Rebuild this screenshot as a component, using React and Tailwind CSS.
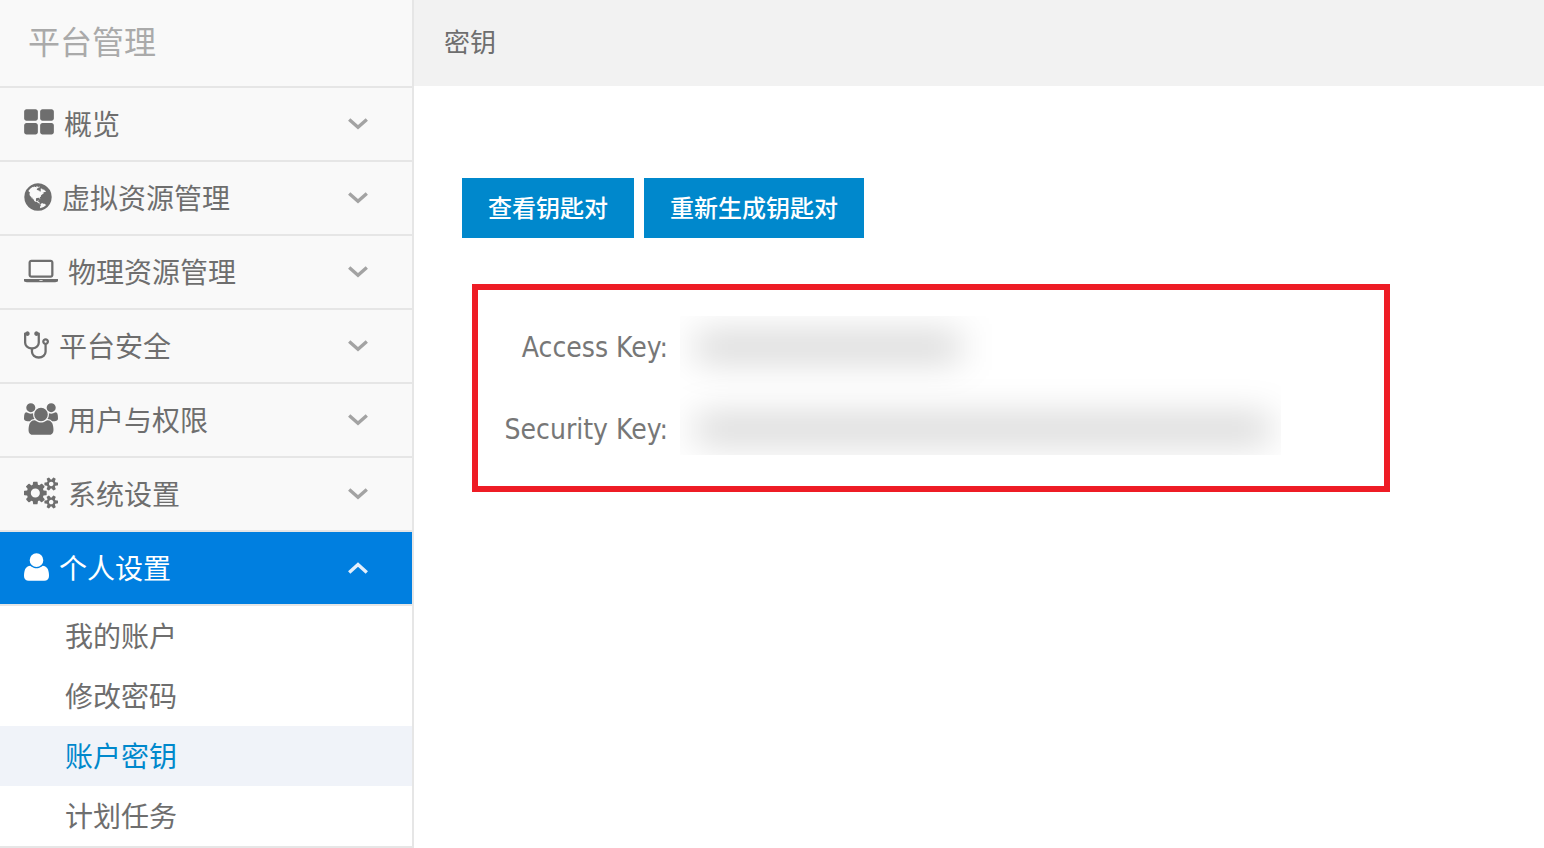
import React from "react";

const SMALL_COG =
  "q-12 -27 -30 -52q51 -113 51 -138q0 -4 -4 -7q-122 -71 -124 -71q-8 0 -46 47t-52 68q-20 -2 -30 -2t-30 2q-14 -21 -52 -68t-46 -47q-2 0 -124 71q-4 3 -4 7q0 25 51 138q-18 25 -30 52q-149 15 -149 31v140q0 16 149 31q13 29 30 52q-51 113 -51 138q0 4 4 7q4 2 35 20t59 34t30 16q8 0 46 -46.5t52 -67.5q20 2 30 2t30 -2q51 71 92 112l6 2q4 0 124 -70q4 -3 4 -7q0 -25 -51 -138q17 -23 30 -52q149 -15 149 -31z";

const icons = {
  grid: {
    advance: 1664,
    size: "w-[30px]",
    d: "M768 512v-384q0 -52 -38 -90t-90 -38h-512q-52 0 -90 38t-38 90v384q0 52 38 90t90 38h512q52 0 90 -38t38 -90zM768 1280v-384q0 -52 -38 -90t-90 -38h-512q-52 0 -90 38t-38 90v384q0 52 38 90t90 38h512q52 0 90 -38t38 -90zM1664 512v-384q0 -52 -38 -90t-90 -38h-512q-52 0 -90 38t-38 90v384q0 52 38 90t90 38h512q52 0 90 -38t38 -90zM1664 1280v-384q0 -52 -38 -90t-90 -38h-512q-52 0 -90 38t-38 90v384q0 52 38 90t90 38h512q52 0 90 -38t38 -90z",
  },
  globe: {
    advance: 1536,
    size: "w-[28px]",
    d: "M768 1408q209 0 385.5 -103t279.5 -279.5t103 -385.5t-103 -385.5t-279.5 -279.5t-385.5 -103t-385.5 103t-279.5 279.5t-103 385.5t103 385.5t279.5 279.5t385.5 103zM1042 887q-2 -1 -9.5 -9.5t-13.5 -9.5q2 0 4.5 5t5 11t3.5 7q6 7 22 15q14 6 52 12q34 8 51 -11q-2 2 9.5 13t14.5 12q3 2 15 4.5t15 7.5l2 22q-12 -1 -17.5 7t-6.5 21q0 -2 -6 -8q0 7 -4.5 8t-11.5 -1t-9 -1q-10 3 -15 7.5t-8 16.5t-4 15q-2 5 -9.5 11t-9.5 10q-1 2 -2.5 5.5t-3 6.5t-4 5.5t-5.5 2.5t-7 -5t-7.5 -10t-4.5 -5q-3 2 -6 1.5t-4.5 -1t-4.5 -3t-5 -3.5q-3 -2 -8.5 -3t-8.5 -2q15 5 -1 11q-10 4 -16 3q9 4 7.5 12t-8.5 14h5q-1 4 -8.5 8.5t-17.5 8.5t-13 6q-8 5 -34 9.5t-33 0.5q-5 -6 -4.5 -10.5t4 -14t3.5 -12.5q1 -6 -5.5 -13t-6.5 -12q0 -7 14 -15.5t10 -21.5q-3 -8 -16 -16t-16 -12q-5 -8 -1.5 -18.5t10.5 -16.5q2 -2 1.5 -4t-3.5 -4.5t-5.5 -4t-6.5 -3.5l-3 -2q-11 -5 -20.5 6t-13.5 26q-7 25 -16 30q-23 8 -29 -1q-5 13 -41 26q-25 9 -58 4q6 1 0 15q-7 15 -19 12q3 6 4 17.5t1 13.5q3 13 12 23q1 1 7 8.5t9.5 13.5t0.5 6q35 -4 50 11q5 5 11.5 17t10.5 17q9 6 14 5.5t14.5 -5.5t14.5 -5q14 -1 15.5 11t-7.5 20q12 -1 3 17q-4 7 -8 9q-12 4 -27 -5q-8 -4 2 -8q-1 1 -9.5 -10.5t-16.5 -17.5t-16 5q-1 1 -5.5 13.5t-9.5 13.5q-8 0 -16 -15q3 8 -11 15t-24 8q19 12 -8 27q-7 4 -20.5 5t-19.5 -4q-5 -7 -5.5 -11.5t5 -8t10.5 -5.5t11.5 -4t8.5 -3q14 -10 8 -14q-2 -1 -8.5 -3.5t-11.5 -4.5t-6 -4q-3 -4 0 -14t-2 -14q-5 5 -9 17.5t-7 16.5q7 -9 -25 -6l-10 1q-4 0 -16 -2t-20.5 -1t-13.5 8q-4 8 0 20q1 4 4 2q-4 3 -11 9.5t-10 8.5q-46 -15 -94 -41q6 -1 12 1q5 2 13 6.5t10 5.5q34 14 42 7l5 5q14 -16 20 -25q-7 4 -30 1q-20 -6 -22 -12q7 -12 5 -18q-4 3 -11.5 10t-14.5 11t-15 5q-16 0 -22 -1q-146 -80 -235 -222q7 -7 12 -8q4 -1 5 -9t2.5 -11t11.5 3q9 -8 3 -19q1 1 44 -27q19 -17 21 -21q3 -11 -10 -18q-1 2 -9 9t-9 4q-3 -5 0.5 -18.5t10.5 -12.5q-7 0 -9.5 -16t-2.5 -35.5t-1 -23.5l2 -1q-3 -12 5.5 -34.5t21.5 -19.5q-13 -3 20 -43q6 -8 8 -9q3 -2 12 -7.5t15 -10t10 -10.5q4 -5 10 -22.5t14 -23.5q-2 -6 9.5 -20t10.5 -23q-1 0 -2.5 -1t-2.5 -1q3 -7 15.5 -14t15.5 -13q1 -3 2 -10t3 -11t8 -2q2 20 -24 62q-15 25 -17 29q-3 5 -5.5 15.5t-4.5 14.5q2 0 6 -1.5t8.5 -3.5t7.5 -4t2 -3q-3 -7 2 -17.5t12 -18.5t17 -19t12 -13q6 -6 14 -19.5t0 -13.5q9 0 20 -10t17 -20q5 -8 8 -26t5 -24q2 -7 8.5 -13.5t12.5 -9.5l16 -8t13 -7q5 -2 18.5 -10.5t21.5 -11.5q10 -4 16 -4t14.5 2.5t13.5 3.5q15 2 29 -15t21 -21q36 -19 55 -11q-2 -1 0.5 -7.5t8 -15.5t9 -14.5t5.5 -8.5q5 -6 18 -15t18 -15q6 4 7 9q-3 -8 7 -20t18 -10q14 3 14 32q-31 -15 -49 18q0 1 -2.5 5.5t-4 8.5t-2.5 8.5t0 7.5t5 3q9 0 10 3.5t-2 12.5t-4 13q-1 8 -11 20t-12 15q-5 -9 -16 -8t-16 9q0 -1 -1.5 -5.5t-1.5 -6.5q-13 0 -15 1q1 3 2.5 17.5t3.5 22.5q1 4 5.5 12t7.5 14.5t4 12.5t-4.5 9.5t-17.5 2.5q-19 -1 -26 -20q-1 -3 -3 -10.5t-5 -11.5t-9 -7q-7 -3 -24 -2t-24 5q-13 8 -22.5 29t-9.5 37q0 10 2.5 26.5t3 25t-5.5 24.5q3 2 9 9.5t10 10.5q2 1 4.5 1.5t4.5 0t4 1.5t3 6q-1 1 -4 3q-3 3 -4 3q7 -3 28.5 1.5t27.5 -1.5q15 -11 22 2q0 1 -2.5 9.5t-0.5 13.5q5 -27 29 -9q3 -3 15.5 -5t17.5 -5q3 -2 7 -5.5t5.5 -4.5t5 0.5t8.5 6.5q10 -14 12 -24q11 -40 19 -44q7 -3 11 -2t4.5 9.5t0 14t-1.5 12.5l-1 8v18l-1 8q-15 3 -18.5 12t1.5 18.5t15 18.5q1 1 8 3.5t15.5 6.5t12.5 8q21 19 15 35q7 0 11 9q-1 0 -5 3t-7.5 5t-4.5 2q9 5 2 16q5 3 7.5 11t7.5 10q9 -12 21 -2q8 8 1 16q5 7 20.5 10.5t18.5 9.5q7 -2 8 2t1 12t3 12q4 5 15 9t13 5l17 11q3 4 0 4q18 -2 31 11q10 11 -6 20q3 6 -3 9.5t-15 5.5q3 1 11.5 0.5t10.5 1.5q15 10 -7 16q-17 5 -43 -12zM879 10q206 36 351 189q-3 3 -12.5 4.5t-12.5 3.5q-18 7 -24 8q1 7 -2.5 13t-8 9t-12.5 8t-11 7q-2 2 -7 6t-7 5.5t-7.5 4.5t-8.5 2t-10 -1l-3 -1q-3 -1 -5.5 -2.5t-5.5 -3t-4 -3t0 -2.5q-21 17 -36 22q-5 1 -11 5.5t-10.5 7t-10 1.5t-11.5 -7q-5 -5 -6 -15t-2 -13q-7 5 0 17.5t2 18.5q-3 6 -10.5 4.5t-12 -4.5t-11.5 -8.5t-9 -6.5t-8.5 -5.5t-8.5 -7.5q-3 -4 -6 -12t-5 -11q-2 4 -11.5 6.5t-9.5 5.5q2 -10 4 -35t5 -38q7 -31 -12 -48q-27 -25 -29 -40q-4 -22 12 -26q0 -7 -8 -20.5t-7 -21.5q0 -6 2 -16z",
  },
  laptop: {
    advance: 1920,
    size: "w-[34px]",
    d: "M416 256q-66 0 -113 47t-47 113v704q0 66 47 113t113 47h1088q66 0 113 -47t47 -113v-704q0 -66 -47 -113t-113 -47h-1088zM384 1120v-704q0 -13 9.5 -22.5t22.5 -9.5h1088q13 0 22.5 9.5t9.5 22.5v704q0 13 -9.5 22.5t-22.5 9.5h-1088q-13 0 -22.5 -9.5t-9.5 -22.5zM1760 192h160v-96q0 -40 -47 -68t-113 -28h-1600q-66 0 -113 28t-47 68v96h160h1600zM1040 96q16 0 16 16t-16 16h-160q-16 0 -16 -16t16 -16h160z",
  },
  stethoscope: {
    advance: 1408,
    size: "w-[25px]",
    d: "M1280 832q0 26 -19 45t-45 19t-45 -19t-19 -45t19 -45t45 -19t45 19t19 45zM1408 832q0 -62 -35.5 -111t-92.5 -70v-395q0 -159 -131.5 -271.5t-316.5 -112.5t-316.5 112.5t-131.5 271.5v132q-164 20 -274 128t-110 252v512q0 26 19 45t45 19q6 0 16 -2q17 30 47 48t65 18q53 0 90.5 -37.5t37.5 -90.5t-37.5 -90.5t-90.5 -37.5q-33 0 -64 18v-402q0 -106 94 -181t226 -75t226 75t94 181v402q-31 -18 -64 -18q-53 0 -90.5 37.5t-37.5 90.5t37.5 90.5t90.5 37.5q35 0 65 -18t47 -48q10 2 16 2q26 0 45 -19t19 -45v-512q0 -144 -110 -252t-274 -128v-132q0 -106 94 -181t226 -75t226 75t94 181v395q-57 21 -92.5 70t-35.5 111q0 80 56 136t136 56t136 -56t56 -136z",
  },
  users: {
    advance: 1920,
    size: "w-[34px]",
    d: "M593 640q-162 -5 -265 -128h-134q-82 0 -138 40.5t-56 118.5q0 353 124 353q6 0 43.5 -21t97.5 -42.5t119 -21.5q67 0 133 23q-5 -37 -5 -66q0 -139 81 -256zM1664 3q0 -120 -73 -189.5t-194 -69.5h-874q-121 0 -194 69.5t-73 189.5q0 53 3.5 103.5t14 109t26.5 108.5t43 97.5t62 81t85.5 53.5t111.5 20q10 0 43 -21.5t73 -48t107 -48t135 -21.5t135 21.5t107 48t73 48t43 21.5q61 0 111.5 -20t85.5 -53.5t62 -81t43 -97.5t26.5 -108.5t14 -109t3.5 -103.5zM640 1280q0 -106 -75 -181t-181 -75t-181 75t-75 181t75 181t181 75t181 -75t75 -181zM1344 896q0 -159 -112.5 -271.5t-271.5 -112.5t-271.5 112.5t-112.5 271.5t112.5 271.5t271.5 112.5t271.5 -112.5t112.5 -271.5zM1920 671q0 -78 -56 -118.5t-138 -40.5h-134q-103 123 -265 128q81 117 81 256q0 29 -5 66q66 -23 133 -23q59 0 119 21.5t97.5 42.5t43.5 21q124 0 124 -353zM1792 1280q0 -106 -75 -181t-181 -75t-181 75t-75 181t75 181t181 75t181 -75t75 -181z",
  },
  cogs: {
    advance: 1920,
    size: "w-[34px]",
    d:
      "M896 640q0 106 -75 181t-181 75t-181 -75t-75 -181t75 -181t181 -75t181 75t75 181zM1664 128q0 52 -38 90t-90 38t-90 -38t-38 -90q0 -53 37.5 -90.5t90.5 -37.5t90.5 37.5t37.5 90.5zM1664 1152q0 52 -38 90t-90 38t-90 -38t-38 -90q0 -53 37.5 -90.5t90.5 -37.5t90.5 37.5t37.5 90.5zM1280 731v-185q0 -10 -7 -19.5t-16 -10.5l-155 -24q-11 -35 -32 -76q34 -48 90 -115q7 -11 7 -20q0 -12 -7 -19q-23 -30 -82.5 -89.5t-78.5 -59.5q-11 0 -21 7l-115 90q-37 -19 -77 -31q-11 -108 -23 -155q-7 -24 -30 -24h-186q-11 0 -20 7.5t-10 17.5l-23 153q-34 10 -75 31l-118 -89q-7 -7 -20 -7q-11 0 -21 8q-144 133 -144 160q0 9 7 19q10 14 41 53t47 61q-23 44 -35 82l-152 24q-10 1 -17 9.5t-7 19.5v185q0 10 7 19.5t16 10.5l155 24q11 35 32 76q-34 48 -90 115q-7 11 -7 20q0 12 7 20q22 30 82 89t79 59q11 0 21 -7l115 -90q34 18 77 32q11 108 23 154q7 24 30 24h186q11 0 20 -7.5t10 -17.5l23 -153q34 -10 75 -31l118 89q8 7 20 7q11 0 21 -8q144 -133 144 -160q0 -8 -7 -19q-12 -16 -42 -54t-45 -60q23 -48 34 -82l152 -23q10 -2 17 -10.5t7 -19.5z" +
      "M1920 198v-140q0 -16 -149 -31" +
      SMALL_COG +
      "M1920 1222v-140q0 -16 -149 -31" +
      SMALL_COG,
  },
  user: {
    advance: 1408,
    size: "w-[25px]",
    d: "M1408 131q0 -120 -73 -189.5t-194 -69.5h-874q-121 0 -194 69.5t-73 189.5q0 53 3.5 103.5t14 109t26.5 108.5t43 97.5t62 81t85.5 53.5t111.5 20q9 0 42 -21.5t74.5 -48t108 -48t133.5 -21.5t133.5 21.5t108 48t74.5 48t42 21.5q61 0 111.5 -20t85.5 -53.5t62 -81t43 -97.5t26.5 -108.5t14 -109t3.5 -103.5zM1088 1024q0 -159 -112.5 -271.5t-271.5 -112.5t-271.5 112.5t-112.5 271.5t112.5 271.5t271.5 112.5t271.5 -112.5t112.5 -271.5z",
  },
};

function Glyph({ name }) {
  const { advance, size, d } = icons[name];
  return (
    <svg
      viewBox={`0 0 ${advance} 1792`}
      className={`h-8 shrink-0 overflow-visible ${size}`}
      fill="currentColor"
      aria-hidden="true"
    >
      <path transform="translate(0 1536) scale(1 -1)" d={d} />
    </svg>
  );
}

function Chevron({ open }) {
  return (
    <svg
      viewBox="0 0 20 12"
      className={`mt-[2px] ml-auto h-3 w-5 shrink-0 ${open ? "text-[#e3effb]" : "text-[#a3a3a3]"}`}
      fill="none"
      stroke="currentColor"
      strokeWidth="3.4"
      aria-hidden="true"
    >
      <path d={open ? "M1.2 10.6L10 2.6L18.8 10.6" : "M1.2 1.4L10 9.2L18.8 1.4"} />
    </svg>
  );
}

const sections = [
  { label: "概览", icon: "grid" },
  { label: "虚拟资源管理", icon: "globe" },
  { label: "物理资源管理", icon: "laptop" },
  { label: "平台安全", icon: "stethoscope" },
  { label: "用户与权限", icon: "users" },
  { label: "系统设置", icon: "cogs" },
  {
    label: "个人设置",
    icon: "user",
    children: ["我的账户", "修改密码", "账户密钥", "计划任务"],
  },
];

function Section({ label, icon, children }) {
  const open = Boolean(children);
  return (
    <li>
      <button
        type="button"
        aria-expanded={open}
        className={`flex w-full items-center gap-[10px] border-b-2 border-[#e6e6e6] pt-[15px] pr-11 pb-[17px] pl-6 text-left text-[28px] leading-10 ${
          open ? "bg-[#007fe0] text-white" : "bg-[#f9f9f9] text-[#6e6e6e]"
        }`}
      >
        <Glyph name={icon} />
        <span>{label}</span>
        <Chevron open={open} />
      </button>
      {open && (
        <ul className="border-b-2 border-[#e6e6e6] bg-white">
          {children.map((item) => (
            <li key={item}>
              <a
                href="#"
                aria-current={item === "账户密钥" ? "page" : undefined}
                className={`block pt-[9px] pb-[11px] pl-[65px] text-[28px] leading-10 ${
                  item === "账户密钥" ? "bg-[#f0f3f9] text-[#0088cc]" : "text-[#6e6e6e]"
                }`}
              >
                {item}
              </a>
            </li>
          ))}
        </ul>
      )}
    </li>
  );
}

function ActionButton({ children }) {
  return (
    <button
      type="button"
      className="bg-[#0088cc] px-[26px] pt-[11px] pb-[13px] text-2xl leading-9 font-medium text-white"
    >
      {children}
    </button>
  );
}

export default function App() {
  return (
    <div className="flex min-h-screen items-start bg-white font-['Noto_Sans_CJK_SC',sans-serif]">
      <aside className="w-[414px] shrink-0 border-r-2 border-[#e6e6e6]">
        <h1 className="border-b-2 border-[#e6e6e6] bg-[#f9f9f9] pt-4 pb-[22px] pl-7 text-[32px] leading-[48px] text-[#aaaaaa]">
          平台管理
        </h1>
        <nav>
          <ul>
            {sections.map((s) => (
              <Section key={s.label} {...s} />
            ))}
          </ul>
        </nav>
      </aside>

      <div className="min-w-0 flex-1">
        <header className="bg-[#f2f2f2] pt-[21px] pb-[25px] pl-[30px] text-[26px] leading-10 text-[#6e6e6e]">
          <h2>密钥</h2>
        </header>
        <main className="pt-[92px] pr-[154px] pl-12">
          <div className="flex gap-[10px]">
            <ActionButton>查看钥匙对</ActionButton>
            <ActionButton>重新生成钥匙对</ActionButton>
          </div>

          <dl className="mt-[46px] ml-[10px] grid auto-rows-[82px] grid-cols-[190px_minmax(0,601px)] items-center gap-x-3 border-[6px] border-[#ee1c25] py-4 font-['DejaVu_Sans_Condensed','Noto_Sans',sans-serif] text-[28px] leading-9 text-[#777777]">
            <dt className="pt-[2px] text-right">Access Key:</dt>
            <dd className="flex h-full items-center [clip-path:inset(10px_0_-40px_0)]">
              <div className="ml-4 h-6 w-[264px] bg-black/20 blur-[18px]" />
            </dd>
            <dt className="pt-[2px] text-right">Security Key:</dt>
            <dd className="flex h-full items-center [clip-path:inset(-70px_0_15px_0)]">
              <div className="ml-4 h-6 w-[574px] bg-black/20 blur-[18px]" />
            </dd>
          </dl>
        </main>
      </div>
    </div>
  );
}
